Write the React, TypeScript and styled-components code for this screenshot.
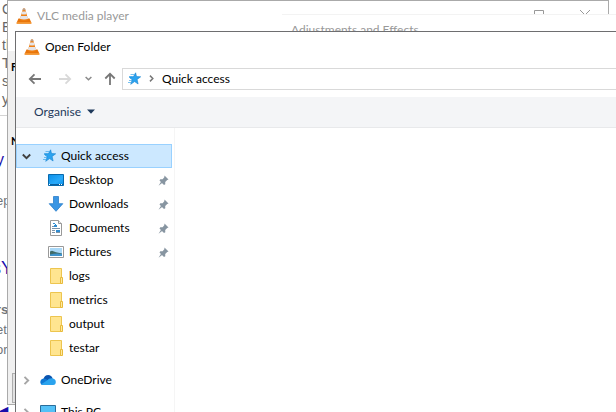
import React from "react";
import styled, { createGlobalStyle } from "styled-components";

const Global = createGlobalStyle`
  * { box-sizing: border-box; }
  html, body, #root { height: 100%; }
  body { margin: 0; overflow: hidden; background: #fff; font-family: Lato, "Open Sans", sans-serif; font-size: 12px; color: #000; }
  button, input { font: inherit; color: inherit; }
  button { background: none; border: 0; padding: 0; display: flex; align-items: center; }
  svg { display: block; flex: none; }
`;

const Screen = styled.div`
  position: relative;
  height: 100%;
  overflow: hidden;
`;

/* Web page lying behind the windows */
const Page = styled.div`
  position: absolute;
  inset: 0;
  font-family: "Liberation Sans", sans-serif;
  color: #666;
  white-space: nowrap;
`;
const Intro = styled.p`
  margin: 0;
  padding: 0 0 9px 2px;
  height: 116px;
  font-size: 14px;
  line-height: 18px;
  border-bottom: 1px solid #d4d4d4;
`;
const PageLine = styled.div<{ $h: number; $size?: number; $blue?: boolean; $bold?: boolean }>`
  height: ${p => p.$h}px;
  margin-left: ${p => (p.$size === 18 ? -8 : -4)}px;
  display: flex;
  align-items: flex-end;
  line-height: 20px;
  font-size: ${p => p.$size ?? 13}px;
  font-weight: ${p => (p.$bold ? 700 : 400)};
  color: ${p => (p.$blue ? "#1a0dab" : "#70757a")};
`;

/* Free floating windows */
const Player = styled.section`
  position: absolute;
  left: 7px;
  right: 7px;
  top: 0;
  height: 405px;
  display: flex;
  flex-direction: column;
  background: #f0f0f0;
  border: 1px solid #aaa;
`;
const TitleBar = styled.header<{ $muted?: boolean }>`
  display: flex;
  flex: none;
  align-items: center;
  height: ${p => (p.$muted ? 50 : 30)}px;
  padding: 0 0 ${p => (p.$muted ? 20 : 0)}px 8px;
  background: #fff;
  color: ${p => (p.$muted ? "#999" : "#000")};
`;
const Title = styled.h1`
  margin: 0 0 0 5px;
  flex: 1;
  font-size: 12px;
  font-weight: 400;
  line-height: 16px;
`;
const Caption = styled.button`
  width: 46px;
  height: 30px;
  padding-bottom: 2px;
  justify-content: center;
`;
const PlayerBody = styled.div`
  display: flex;
  flex-direction: column;
  flex: 1;
  justify-content: space-between;
  padding: 8px 3px 1px;
  font-weight: 700;
  font-size: 11px;
  line-height: 16px;
`;
const Group = styled.div`
  height: 74px;
`;
const Footer = styled.div`
  height: 30px;
  margin-left: 1px;
  border: 1px solid #adadad;
  background: #e1e1e1;
`;
const Effects = styled.section`
  position: absolute;
  left: 282px;
  right: 0;
  top: 14px;
  height: 60px;
  padding: 7px 9px;
  background: #fff;
  border-top: 1px solid #f3f3f3;
  color: #999;
  line-height: 16px;
`;
const Dialog = styled.section`
  position: absolute;
  left: 15px;
  right: 0;
  top: 31px;
  bottom: 0;
  display: flex;
  flex-direction: column;
  overflow: hidden;
  background: #fff;
  border: solid #6e6e70;
  border-width: 1px 0 0 1px;
`;
const NavBar = styled.nav`
  display: flex;
  flex: none;
  align-items: center;
  height: 35px;
  padding: 0 0 2px 12px;
`;
const NavButton = styled.button<{ $w: number }>`
  width: ${p => p.$w}px;
  height: 22px;
`;
const Address = styled.div`
  display: flex;
  align-items: center;
  flex: 1;
  height: 22px;
  padding-left: 4px;
  border: 1px solid #d9d9d9;
  border-right: 0;
`;
const Crumb = styled.button`
  padding-left: 7px;
  line-height: 16px;
`;
const ToolBar = styled.div`
  display: flex;
  flex: none;
  align-items: center;
  height: 31px;
  padding: 0 0 1px 18px;
  background: #f4f5f7;
  border-bottom: 1px solid #e8e9eb;
  color: #1e395b;
`;
const Organise = styled.button`
  gap: 6px;
`;
const Content = styled.div`
  display: flex;
  flex: 1;
  min-height: 0;
`;
const Tree = styled.ul`
  width: 159px;
  height: 100%;
  margin: 0;
  padding: 16px 2px 0 0;
  list-style: none;
  border-right: 1px solid #f5f5f5;
`;
const Branch = styled.li<{ $gap?: boolean }>`
  margin-top: ${p => (p.$gap ? 8 : 0)}px;
`;
const Row = styled.button<{ $child?: boolean; $on?: boolean }>`
  width: 100%;
  height: 24px;
  padding: 0 2px 0 ${p => (p.$child ? 31 : 5)}px;
  gap: 5px;
  border: 1px solid ${p => (p.$on ? "#99d1ff" : "transparent")};
  background: ${p => (p.$on ? "#cce8ff" : "none")};
  text-align: left;
  line-height: 16px;
`;
const RowText = styled.span`
  flex: 1;
`;
const Twist = styled.span`
  width: 13px;
`;

const Cone = () => (
  <svg width="16" height="16" viewBox="0 0 16 16">
    <path d="M2.500 10.500h11L15.500 15q0 .8-.8.8H1.200q-.8 0-.7-.8z" fill="#e8750c" />
    <path d="M1 14.200h14l.5 1.200H.5z" fill="#f9a13a" />
    <path d="M7 .5h2L12.300 12q-4.300 2.200-8.600 0z" fill="#f08013" />
    <path d="M6.200 3.400h3.600l.8 2.600q-2.600 1-5.200 0zM4.700 8h6.600l.9 2.700q-4.200 1.600-8.400 0z" fill="#e4e4e8" />
    <path d="M7 .5h2l.5 1.700h-3z" fill="#b59f90" />
  </svg>
);
const Star = ({ size = 16 }: { size?: number }) => (
  <svg width={size} height={size} viewBox={size === 14 ? "1 1 14 14" : "-1 0 16 16"}>
    <path d="M9.600 1.800l.9 3.700 4.200.3-3.600 2.600 1 4.600-3.500-2.400L4.700 13.300l1.500-4.400L3.300 6l4.200-.4z" fill="#2ba3f0" stroke="#1481cf" strokeWidth=".6" />
    <path d="M4.500 3.500h3.500M3 5.500h3M4 7.500h2M3 9.500h3M2 11.500h3" stroke="#3ca6ea" strokeWidth=".7" />
  </svg>
);
const Chevron = ({ down, color, size = 9 }: { down?: boolean; color: string; size?: number }) => (
  <svg width={size} height={size} viewBox="0 0 9 9" fill="none" stroke={color} strokeWidth="1.900">
    <path d={down ? "M.8 2.500l3.700 3.700 3.700-3.700" : "M2.500.8l3.700 3.700-3.700 3.700"} />
  </svg>
);
const Arrow = ({ color, turn = 0 }: { color: string; turn?: number }) => (
  <svg width="14" height="14" viewBox="0 0 14 14" fill="none" stroke={color} strokeWidth="1.800">
    <path transform={`rotate(${turn} 7 7)`} d="M13 7H2M6.500 2.300L1.800 7l4.700 4.700" />
  </svg>
);
const Pin = () => (
  <svg width="11" height="11" viewBox="0 0 11 11" fill="#8795a1">
    <path d="M6.500.5l4 4-1.300.5-2 2 .1 2.300-1.300.7L1.500 5.500l.8-1.300 2.300.1 1.700-2z" />
    <path d="M3.200 6.500l1.300 1.300L.5 10.700z" />
  </svg>
);
const Desktop = () => (
  <svg width="16" height="16" viewBox="0 0 16 16">
    <defs>
      <linearGradient id="desk" x2="1" y2="1">
        <stop stopColor="#0c8fe8" /><stop offset=".6" stopColor="#29aafa" /><stop offset="1" stopColor="#0c8fe8" />
      </linearGradient>
    </defs>
    <path d="M.5 2.500h15v11H.5z" fill="url(#desk)" stroke="#0869ac" />
    <path d="M1 12.500h14" stroke="#0b5f9e" />
    <path d="M1 12.500h1m9 0h1m1 0h1" stroke="#fff" />
  </svg>
);
const Download = () => (
  <svg width="16" height="16" viewBox="0 0 16 16">
    <path d="M5.500.5h5v7.200h4.300L8 15.300 1.200 7.700h4.300z" fill="#3a96e4" stroke="#2b7fca" strokeWidth=".8" />
  </svg>
);
const Document = () => (
  <svg width="16" height="16" viewBox="0 0 16 16">
    <path d="M2.500.5h8l3 3v12h-11z" fill="#fff" stroke="#999" />
    <path d="M10.500.5v3h3" fill="#eee" stroke="#999" />
    <path d="M4 6.500h2M4 8.500h8M4 10.500h3M4 12.500h3M8 12.500h4" stroke="#7d93a8" />
    <path d="M5 3h2v1H5zM6 5h1V4h1v1h1v2H6zM8 10h4v2H8z" fill="#2f8cd0" />
  </svg>
);
const Picture = () => (
  <svg width="16" height="16" viewBox="0 0 16 16">
    <path d="M.5 2.500h15v11H.5z" fill="#fff" stroke="#999" />
    <path d="M2 4h12v8H2z" fill="#a9d8f7" />
    <path d="M2 7.500l2-.8 4 1.500 6 1.300v1.500H2z" fill="#3f6b68" />
    <path d="M2 10.500q6-1.500 12-.5v2H2z" fill="#3f93cb" />
  </svg>
);
const Folder = () => (
  <svg width="16" height="16" viewBox="0 0 16 16">
    <path d="M2.500.5h11v15h-11z" fill="#ffe590" stroke="#edc54f" />
    <path d="M12.500 9.500h2v6h-2z" fill="#ffe9a2" stroke="#e8bb3b" />
  </svg>
);
const Cloud = () => (
  <svg width="16" height="16" viewBox="0 0 16 16">
    <path d="M3.500 7Q4.500 3 8.200 3q3.300 0 4.500 3.500L8 10z" fill="#0a55b0" />
    <path d="M.3 10.500Q.2 7 3.600 6.500q2.300-.2 4 1.500L13 13H3Q.5 13 .3 10.500z" fill="#0f78d4" />
    <path d="M7 8.500q2-2.600 5-2.300 3.800.4 3.800 3.800T12.500 13H3.200q-1.300 0-2-.8z" fill="#2aa3ee" />
  </svg>
);
const Computer = () => (
  <svg width="16" height="16" viewBox="0 0 16 16">
    <path d="M.5 1.500h15v10H.5z" fill="#54c1f7" stroke="#2a6d9a" />
    <path d="M4 14.500h8" stroke="#557" />
  </svg>
);

const children = [
  { name: "Desktop", Icon: Desktop, pinned: true },
  { name: "Downloads", Icon: Download, pinned: true },
  { name: "Documents", Icon: Document, pinned: true },
  { name: "Pictures", Icon: Picture, pinned: true },
  { name: "logs", Icon: Folder },
  { name: "metrics", Icon: Folder },
  { name: "output", Icon: Folder },
  { name: "testar", Icon: Folder },
];

export default function App() {
  return (
    <>
      <Global />
      <Screen>
        <Page>
          <Intro>C<br />E<br />th<br />T<br />s<br />y</Intro>
          <PageLine $h={54} $size={16} $blue>y</PageLine>
          <PageLine $h={41}>ep</PageLine>
          <PageLine $h={67} $size={18} $blue>sY</PageLine>
          <PageLine $h={42} $bold>rs</PageLine>
          <PageLine $h={20}>et</PageLine>
          <PageLine $h={20}>ore</PageLine>
          <PageLine $h={62} $size={16} $blue>◀</PageLine>
        </Page>
        <Player>
          <TitleBar $muted>
            <Cone />
            <Title>VLC media player</Title>
            <Caption aria-label="Maximise">
              <svg width="10" height="10" viewBox="0 0 10 10" fill="none" stroke="#999"><path d="M.5.5h9v9h-9z" /></svg>
            </Caption>
            <Caption aria-label="Close">
              <svg width="10" height="10" viewBox="0 0 10 10" stroke="#999"><path d="M0 0l10 10M10 0L0 10" /></svg>
            </Caption>
          </TitleBar>
          <PlayerBody>
            <div>
              <Group>F</Group>
              <Group>N</Group>
            </div>
            <Footer />
          </PlayerBody>
        </Player>
        <Effects>Adjustments and Effects</Effects>
        <Dialog>
          <TitleBar>
            <Cone />
            <Title>Open Folder</Title>
          </TitleBar>
          <NavBar>
            <NavButton $w={30} aria-label="Back"><Arrow color="#777" /></NavButton>
            <NavButton $w={27} aria-label="Forward"><Arrow color="#d9d9d9" turn={180} /></NavButton>
            <NavButton $w={18} aria-label="Recent locations"><Chevron down color="#8a8a8a" size={7} /></NavButton>
            <NavButton $w={19} aria-label="Up"><Arrow color="#777" turn={90} /></NavButton>
            <Address>
              <Star size={14} />
              <Crumb aria-label="Locations"><Chevron color="#777" size={7} /></Crumb>
              <Crumb>Quick access</Crumb>
            </Address>
          </NavBar>
          <ToolBar>
            <Organise>
              Organise
              <svg width="8" height="5" viewBox="0 0 8 5"><path d="M0 .5h8L4 4.800z" fill="#1e395b" /></svg>
            </Organise>
          </ToolBar>
          <Content>
            <Tree>
              <Branch>
                <Row $on><Twist><Chevron down color="#404040" /></Twist><Star /><RowText>Quick access</RowText></Row>
              </Branch>
              {children.map(({ name, Icon, pinned }) => (
                <Branch key={name}>
                  <Row $child><Icon /><RowText>{name}</RowText>{pinned && <Pin />}</Row>
                </Branch>
              ))}
              <Branch $gap>
                <Row><Twist><Chevron color="#a6a6a6" /></Twist><Cloud /><RowText>OneDrive</RowText></Row>
              </Branch>
              <Branch $gap>
                <Row><Twist><Chevron color="#a6a6a6" /></Twist><Computer /><RowText>This PC</RowText></Row>
              </Branch>
            </Tree>
          </Content>
        </Dialog>
      </Screen>
    </>
  );
}
